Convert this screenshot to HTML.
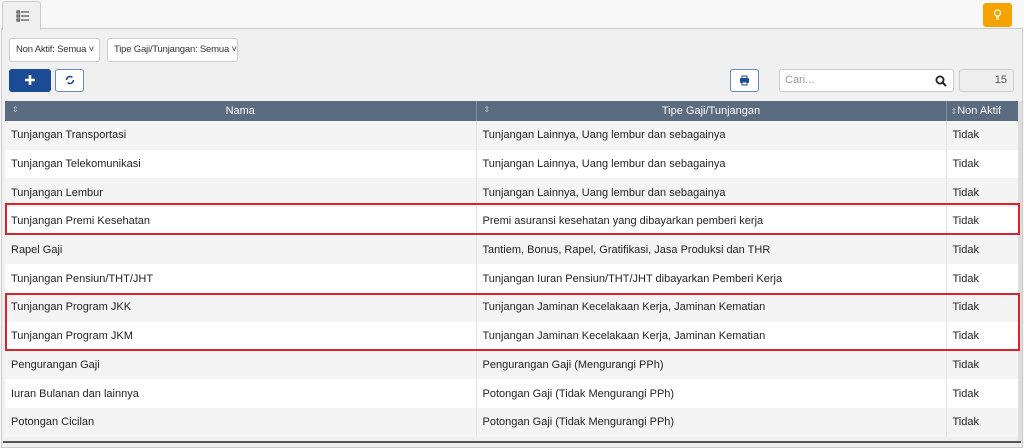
<!DOCTYPE html>
<html><head><style>
*{box-sizing:border-box;margin:0;padding:0}
body{width:1024px;height:448px;overflow:hidden;background:#f8f8f8;font-family:"Liberation Sans",sans-serif;font-size:11px;color:#222;position:relative}
.abs{position:absolute}
.panel{left:1px;top:28px;width:1022px;height:420px;background:#f0f0f0;border:1px solid #ccc}
.tab{left:2px;top:1px;width:39px;height:29px;background:#f0f0f0;border:1px solid #ccc;border-bottom:none;border-radius:3px 3px 0 0}
.sel{top:38px;height:24px;background:#fff;border:1px solid #ccc;border-radius:3px;font-size:9.5px;line-height:22px;padding-left:6px;color:#333;white-space:nowrap;overflow:hidden;letter-spacing:-0.2px}
.btn{top:69px;height:23px;border-radius:3px}
table{position:absolute;left:5px;top:101px;width:1013px;border-collapse:collapse;table-layout:fixed}
th{background:#5b6b80;color:#fff;font-weight:normal;height:20px;padding:0;font-size:11px;border-right:1px solid #8090a2;position:relative}
th .s{position:absolute;left:7px;top:4px;font-size:8px;color:#b8c2cf}
td{height:28.7px;padding:0 0 0 6px;border-right:1px solid #e4e4e4;white-space:nowrap;overflow:hidden;font-size:11px}
tr:nth-child(odd) td{background:#fff}
tr:nth-child(even) td{background:#f4f4f4}
.red{border:2px solid #d9242c;left:5px;width:1015px}
</style></head><body>
<div class="abs panel"></div>
<div class="abs tab"><svg style="position:absolute;left:13px;top:8px" width="14" height="12"><g fill="none" stroke="#555" stroke-width="1.2"><rect x="1" y="1" width="2.5" height="2"/><rect x="1" y="5" width="2.5" height="2"/><rect x="1" y="9" width="2.5" height="2"/><path d="M5 2h8M5 6h8M5 10h8"/></g></svg></div>
<div class="abs" style="left:983px;top:3px;width:29px;height:24px;background:#f5a300;border-radius:3px"><svg style="position:absolute;left:10px;top:6px" width="9" height="12"><circle cx="4.5" cy="4" r="3" fill="none" stroke="#fff" stroke-width="1.2"/><path d="M3 8h3M3 10h3" stroke="#fff" stroke-width="1.2"/></svg></div>
<div class="abs sel" style="left:9px;width:91px">Non Aktif: Semua ˅</div>
<div class="abs sel" style="left:107px;width:131px">Tipe Gaji/Tunjangan: Semua ˅</div>
<div class="abs btn" style="left:9px;width:42px;background:#1a4b94"><svg style="position:absolute;left:15px;top:5px" width="12" height="12"><path d="M6 1v10M1 6h10" stroke="#fff" stroke-width="2.6"/></svg></div>
<div class="abs btn" style="left:55px;width:29px;background:#fff;border:1px solid #6a8ab8"><svg style="position:absolute;left:9px;top:5px" width="10" height="10"><circle cx="5" cy="5" r="3.5" fill="none" stroke="#1a4b94" stroke-width="1.6" stroke-dasharray="8 3"/></svg></div>
<div class="abs btn" style="left:730px;width:29px;background:#fff;border:1px solid #6a8ab8"><svg style="position:absolute;left:8px;top:5px" width="11" height="11"><rect x="1" y="3" width="9" height="5" rx="1" fill="#1a4b94"/><rect x="3" y="1" width="5" height="3" fill="none" stroke="#1a4b94"/><rect x="3" y="7" width="5" height="3" fill="#fff" stroke="#1a4b94"/></svg></div>
<div class="abs" style="left:779px;top:69px;width:175px;height:23px;background:#fff;border:1px solid #ccc;border-radius:3px;color:#999;line-height:21px;padding-left:5px">Cari...<svg style="position:absolute;right:6px;top:5px" width="12" height="12"><circle cx="5" cy="5" r="3.6" fill="none" stroke="#222" stroke-width="1.8"/><path d="M7.6 7.6l3.4 3.4" stroke="#222" stroke-width="2"/></svg></div>
<div class="abs" style="left:959px;top:69px;width:55px;height:23px;background:#eee;border:1px solid #ccc;border-radius:3px;color:#555;text-align:right;line-height:21px;padding-right:6px">15</div>
<table>
<colgroup><col style="width:471px"><col style="width:470px"><col style="width:72px"></colgroup>
<tr><th><span class="s">⇕</span>Nama</th><th><span class="s">⇕</span>Tipe Gaji/Tunjangan</th><th style="text-align:left;padding-left:4px"><span style="font-size:8px;color:#b8c2cf">⇕</span>Non Aktif</th></tr>
<tr><td>Tunjangan Transportasi</td><td>Tunjangan Lainnya, Uang lembur dan sebagainya</td><td>Tidak</td></tr>
<tr><td>Tunjangan Telekomunikasi</td><td>Tunjangan Lainnya, Uang lembur dan sebagainya</td><td>Tidak</td></tr>
<tr><td>Tunjangan Lembur</td><td>Tunjangan Lainnya, Uang lembur dan sebagainya</td><td>Tidak</td></tr>
<tr><td>Tunjangan Premi Kesehatan</td><td>Premi asuransi kesehatan yang dibayarkan pemberi kerja</td><td>Tidak</td></tr>
<tr><td>Rapel Gaji</td><td>Tantiem, Bonus, Rapel, Gratifikasi, Jasa Produksi dan THR</td><td>Tidak</td></tr>
<tr><td>Tunjangan Pensiun/THT/JHT</td><td>Tunjangan Iuran Pensiun/THT/JHT dibayarkan Pemberi Kerja</td><td>Tidak</td></tr>
<tr><td>Tunjangan Program JKK</td><td>Tunjangan Jaminan Kecelakaan Kerja, Jaminan Kematian</td><td>Tidak</td></tr>
<tr><td>Tunjangan Program JKM</td><td>Tunjangan Jaminan Kecelakaan Kerja, Jaminan Kematian</td><td>Tidak</td></tr>
<tr><td>Pengurangan Gaji</td><td>Pengurangan Gaji (Mengurangi PPh)</td><td>Tidak</td></tr>
<tr><td>Iuran Bulanan dan lainnya</td><td>Potongan Gaji (Tidak Mengurangi PPh)</td><td>Tidak</td></tr>
<tr><td>Potongan Cicilan</td><td>Potongan Gaji (Tidak Mengurangi PPh)</td><td>Tidak</td></tr>
</table>
<div class="abs" style="left:1018px;top:101px;width:4px;height:342px;background:#ddd"></div>
<div class="abs" style="left:3px;top:441px;width:1018px;height:2px;background:#555"></div>
<div class="abs red" style="top:203px;height:32px"></div>
<div class="abs red" style="top:293px;height:58px"></div>
</body></html>
